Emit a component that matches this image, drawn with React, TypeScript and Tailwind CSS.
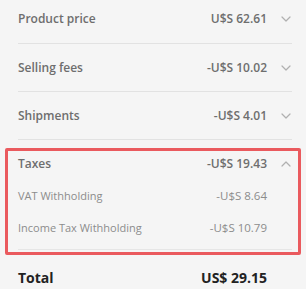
interface RowProps {
  label: string;
  amount: string;
  open?: boolean;
}

function Chevron({ open }: { open?: boolean }) {
  return (
    <svg width="10" height="6" viewBox="0 0 10 6" fill="none" className="text-[#b0b0b0]">
      <polyline
        points={open ? "1,5 5,1 9,5" : "1,1 5,5 9,1"}
        stroke="currentColor"
        strokeWidth="1.2"
        strokeLinecap="round"
        strokeLinejoin="round"
      />
    </svg>
  );
}

function SummaryRow({ label, amount, open }: RowProps) {
  return (
    <div className="flex items-center h-[20px]">
      <span className="flex-1 text-[12px] font-semibold text-[#6e6e6e]">{label}</span>
      <span className="text-[12px] font-semibold text-[#6e6e6e]">{amount}</span>
      <span className="ml-[12px] w-[13px] flex justify-center">
        <Chevron open={open} />
      </span>
    </div>
  );
}

function SubRow({ label, amount }: { label: string; amount: string }) {
  return (
    <div className="flex items-center h-[20px] pr-[25px]">
      <span className="flex-1 text-[11px] text-[#8c8c8c]">{label}</span>
      <span className="text-[11.5px] text-[#8c8c8c]">{amount}</span>
    </div>
  );
}

export default function App() {
  return (
    <div
      className="w-[306px] h-[289px] overflow-hidden bg-[#f5f5f5]"
      style={{ fontFamily: "'Open Sans', 'Liberation Sans', sans-serif" }}
    >
      {/* Collapsed rows */}
      <div className="ml-[18px] w-[274px]">
        <div className="pt-[9px] pb-[14px] border-b border-[#e2e2e2]">
          <SummaryRow label="Product price" amount="U$S 62.61" />
        </div>
        <div className="pt-[14px] pb-[13px] border-b border-[#e2e2e2]">
          <SummaryRow label="Selling fees" amount="-U$S 10.02" />
        </div>
        <div className="pt-[14px] pb-[13px] border-b border-[#e2e2e2]">
          <SummaryRow label="Shipments" amount="-U$S 4.01" />
        </div>
      </div>

      {/* Highlighted taxes section */}
      <div className="mt-[8px] ml-[5px] w-[296px] border-[3px] border-[#ea5a5e] rounded-[2px] pl-[10px] pr-[6px] pb-[2px]">
        <div className="w-[274px] pt-[3px] pb-[11px] border-b border-[#e6e6e6] flex flex-col gap-[12px]">
          <SummaryRow label="Taxes" amount="-U$S 19.43" open />
          <SubRow label="VAT Withholding" amount="-U$S 8.64" />
          <SubRow label="Income Tax Withholding" amount="-U$S 10.79" />
        </div>
      </div>

      {/* Total */}
      <div className="ml-[18px] w-[274px] mt-[12px] pr-[25px] flex items-center h-[20px]">
        <span className="flex-1 text-[14px] font-bold text-[#222]">Total</span>
        <span className="text-[14px] font-bold text-[#222]">US$ 29.15</span>
      </div>
    </div>
  );
}
